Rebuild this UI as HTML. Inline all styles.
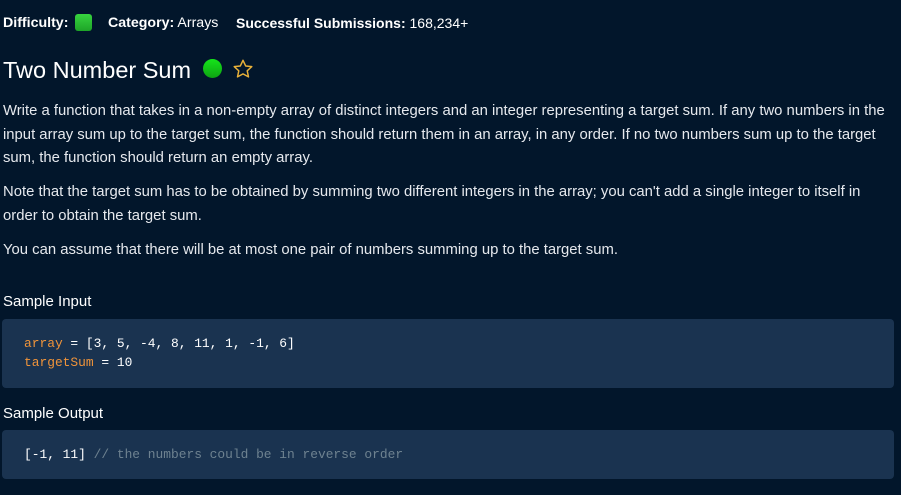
<!DOCTYPE html>
<html><head><style>
body{margin:0;background:#02162b;width:901px;height:495px;overflow:hidden;font-family:"Liberation Sans",sans-serif;color:#fff;position:relative}
.a{position:absolute;white-space:nowrap}
p{position:absolute;left:3px;margin:0;width:892px;font-size:14.85px;line-height:23.5px;color:#e6e9ee}
.code{position:absolute;left:2px;width:892px;background:#1a3350;border-radius:4px;font-family:"Liberation Mono",monospace;font-size:12.9px;line-height:19px}
.o{color:#f0943a}.c{color:#6e8290}
</style></head><body>
<div class="a" style="left:3px;top:15px;font-size:14.2px;font-weight:bold">Difficulty:</div>
<div class="a" style="left:75px;top:14px;width:17px;height:17px;border-radius:3px;background:linear-gradient(#37d43f,#1ea428)"></div>
<div class="a" style="left:108px;top:15px;font-size:14.2px"><b>Category:</b> Arrays</div>
<div class="a" style="left:236px;top:15px;font-size:14px"><b>Successful Submissions:</b> 168,234+</div>
<div class="a" style="left:3px;top:57px;font-size:23.5px">Two Number Sum</div>
<div class="a" style="left:203px;top:59px;width:19px;height:19px;border-radius:50%;background:linear-gradient(#15e51a,#0ea313)"></div>
<svg class="a" style="left:232px;top:58px" width="22" height="22" viewBox="0 0 24 24"><path d="M12 2.5l2.9 6.2 6.7.7-5 4.6 1.4 6.6L12 17.3l-6 3.3 1.4-6.6-5-4.6 6.7-.7z" fill="none" stroke="#e8b13a" stroke-width="1.6" stroke-linejoin="round"/></svg>
<p style="top:100px">Write a function that takes in a non-empty array of distinct integers and an integer representing a target sum. If any two numbers in the input array sum up to the target sum, the function should return them in an array, in any order. If no two numbers sum up to the target sum, the function should return an empty array.</p>
<p style="top:181px">Note that the target sum has to be obtained by summing two different integers in the array; you can't add a single integer to itself in order to obtain the target sum.</p>
<p style="top:239px">You can assume that there will be at most one pair of numbers summing up to the target sum.</p>
<div class="a" style="left:3px;top:293px;font-size:15px">Sample Input</div>
<div class="code" style="top:319px;height:69px"><div style="position:absolute;left:22px;top:15px"><span class="o">array</span> = [3, 5, -4, 8, 11, 1, -1, 6]<br><span class="o">targetSum</span> = 10</div></div>
<div class="a" style="left:3px;top:405px;font-size:15px">Sample Output</div>
<div class="code" style="top:430px;height:49px"><div style="position:absolute;left:22px;top:15px">[-1, 11] <span class="c">// the numbers could be in reverse order</span></div></div>
</body></html>
